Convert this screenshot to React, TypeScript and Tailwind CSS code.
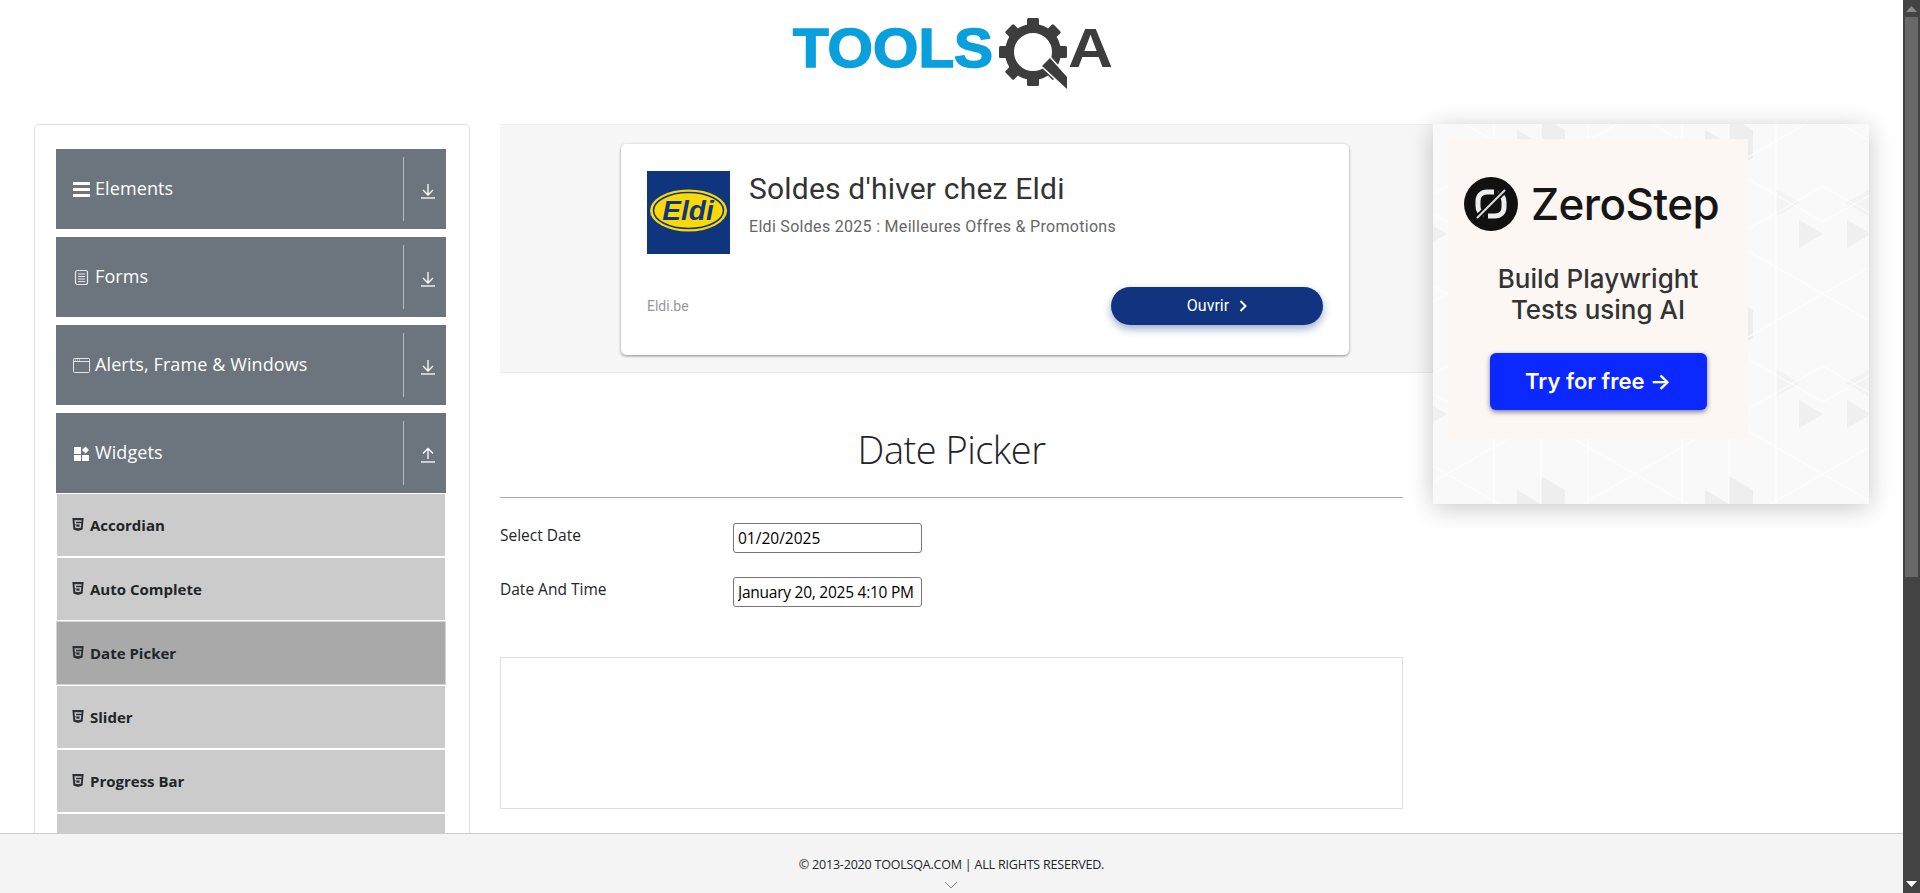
import { FaHtml5 } from "react-icons/fa";

const SEGOE = "font-['Open_Sans',sans-serif]";

const GROUPS = [
  { label: "Elements", icon: <BarsIcon />, open: false },
  { label: "Forms", icon: <FormIcon />, open: false },
  { label: "Alerts, Frame & Windows", icon: <WindowIcon />, open: false },
  { label: "Widgets", icon: <WidgetIcon />, open: true },
];

const WIDGETS = ["Accordian", "Auto Complete", "Date Picker", "Slider", "Progress Bar", "Tabs"];

function BarsIcon() {
  return (
    <svg width="17" height="17" viewBox="0 0 17 17" fill="#fff">
      <rect x="0" y="1" width="17" height="3" />
      <rect x="0" y="7" width="17" height="3" />
      <rect x="0" y="13" width="17" height="3" />
    </svg>
  );
}

function FormIcon() {
  return (
    <svg width="17" height="17" viewBox="0 0 17 17" fill="none" stroke="#e4e6e8">
      <rect x="2.5" y="1.5" width="12" height="14" rx="2" strokeWidth="1.2" />
      <path d="M5 5h7M5 7.5h7M5 10h7M5 12.5h7" strokeWidth="1" />
    </svg>
  );
}

function WindowIcon() {
  return (
    <svg width="17" height="17" viewBox="0 0 17 17" fill="none" stroke="#e4e6e8">
      <rect x="0.5" y="1.5" width="16" height="14" rx="1" strokeWidth="1" />
      <path d="M1 4.5h15" strokeWidth="1" />
      <path d="M2 3h1M4 3h1M6 3h1" strokeWidth="1" />
    </svg>
  );
}

function WidgetIcon() {
  return (
    <svg width="17" height="17" viewBox="0 0 17 17" fill="#fff">
      <rect x="1" y="2" width="7" height="7" />
      <rect x="1" y="10" width="7" height="6" />
      <rect x="9" y="10" width="7" height="6" />
      <rect x="10" y="2.5" width="5" height="5" transform="rotate(45 12.5 5)" />
    </svg>
  );
}

function ArrowIcon({ up }: { up: boolean }) {
  return (
    <svg width="16" height="16" viewBox="0 0 16 16" fill="none" stroke="#fff" strokeWidth="1.3">
      <path d="M1 15h14" />
      {up ? <path d="M8 12V1.5M3 6.5l5-5 5 5" /> : <path d="M8 1v11M3 7l5 5 5-5" />}
    </svg>
  );
}

function Logo() {
  const teeth = [0, 45, 90, 135, 180, 225, 270, 315];
  return (
    <svg width="330" height="96" viewBox="787 0 330 96">
      <text
        x="793"
        y="67"
        textLength="200"
        lengthAdjust="spacingAndGlyphs"
        fontFamily="'Liberation Sans', sans-serif"
        fontWeight="700"
        fontSize="56"
        fill="#0a9fdd"
        stroke="#0a9fdd"
        strokeWidth="1.6"
      >
        TOOLS
      </text>
      <circle cx="1033" cy="52" r="23.5" fill="none" stroke="#3d3d3d" strokeWidth="9" />
      {teeth.map((a) => (
        <rect key={a} x="1027" y="18" width="12" height="11" rx="1.5" fill="#3d3d3d" transform={`rotate(${a} 1033 52)`} />
      ))}
      <polygon points="1050,58 1067,77 1067,89 1042,66" fill="#3d3d3d" stroke="#fff" strokeWidth="3" paintOrder="stroke" />
      <text
        x="1068"
        y="67"
        textLength="45"
        lengthAdjust="spacingAndGlyphs"
        fontFamily="'Liberation Sans', sans-serif"
        fontWeight="700"
        fontSize="56"
        fill="#3d3d3d"
      >
        A
      </text>
    </svg>
  );
}

function EldiLogo() {
  return (
    <svg width="83" height="83" viewBox="0 0 83 83" className="shrink-0">
      <rect width="83" height="83" fill="#10357f" />
      <ellipse cx="41.5" cy="39.5" rx="38.5" ry="21" fill="#fbd908" />
      <ellipse cx="41.5" cy="39.5" rx="35" ry="18" fill="#fbd908" stroke="#10357f" strokeWidth="1.6" />
      <text
        x="41"
        y="49"
        textAnchor="middle"
        fontFamily="'Liberation Sans', sans-serif"
        fontWeight="700"
        fontStyle="italic"
        fontSize="28"
        fill="#10357f"
      >
        Eldi
      </text>
    </svg>
  );
}

function ZeroStepMark() {
  return (
    <svg width="54" height="54" viewBox="0 0 54 54" className="shrink-0">
      <circle cx="27" cy="27" r="27" fill="#111" />
      <path d="M20 37c-4-1-6-4-6-8v-5c0-6 4-9 9-9h7" fill="none" stroke="#eee" strokeWidth="5" />
      <path d="M34 17c4 1 6 4 6 8v5c0 6-4 9-9 9h-7" fill="none" stroke="#eee" strokeWidth="5" />
      <path d="M12 42L42 12" stroke="#111" strokeWidth="6" />
      <path d="M13 41L41 13" stroke="#ddd" strokeWidth="2" />
    </svg>
  );
}

function TrianglePattern() {
  return (
    <svg className="absolute inset-0 h-full w-full" aria-hidden="true">
      <defs>
        <pattern id="tri" width="188" height="180" x="14" y="-10" patternUnits="userSpaceOnUse">
          <rect width="188" height="180" fill="#f9f9f9" />
          <path d="M94 30l24-14v28zM94 30L70 16v28zM94 30v28l24-14zM94 30v-28l24 14z" fill="#eeeeee" />
          <path d="M0 120l24-14v28zM0 120l24 14 24-14-24-14zM188 120l-24-14v28z" fill="#f0f0f0" />
          <path d="M141 75l24 14-24 14zM47 75l-24 14 24 14z" fill="#f3f3f3" />
          <path d="M0 0l188 108M0 72l188 108M0 108L188 0M0 180l188-108M47 0v180M94 0v180M141 0v180" stroke="#ffffff" strokeWidth="1" fill="none" />
        </pattern>
      </defs>
      <rect width="100%" height="100%" fill="url(#tri)" />
    </svg>
  );
}

function Sidebar() {
  return (
    <aside className="h-[900px] w-[436px] shrink-0 rounded-[5px] border border-[#dfdfdf] bg-white pt-6 pr-[23px] pl-[21px]">
      <div className="flex flex-col gap-2">
        {GROUPS.map((g) => (
          <div key={g.label} className="flex h-20 items-center bg-[#6c757d] pl-[17px] text-white">
            <span className="flex w-[17px] shrink-0 items-center">{g.icon}</span>
            <span className="ml-[5px] flex-1 -translate-y-px text-[18px] tracking-[0.1px]">{g.label}</span>
            <span className="h-16 w-px bg-[#b4b9bd]" />
            <span className="flex w-[42px] translate-y-0.5 justify-center pl-1.5">
              <ArrowIcon up={g.open} />
            </span>
          </div>
        ))}
      </div>
      <div className="mx-px mt-px flex flex-col gap-0.5">
        {WIDGETS.map((w) => (
          <div
            key={w}
            className={`flex h-[62px] items-center pl-[14px] text-[#212529] ${
              w === "Date Picker" ? "bg-[#a9a9a9] outline outline-[#d3d6d9]" : "bg-[#cbcbcb]"
            }`}
          >
            <FaHtml5 className="h-[15px] w-[14px] shrink-0 -translate-y-[1px] text-[#2b2e33]" />
            <span className="ml-[5px] text-[15px] font-bold">{w}</span>
          </div>
        ))}
      </div>
    </aside>
  );
}

function AdBanner() {
  return (
    <div className="-mr-[30px] h-[249px] border-y border-[#eeeeee] bg-[#f7f7f7] pt-[19px] pl-[121px]">
      <div className="flex h-[211px] w-[728px] flex-col rounded-[5px] bg-white px-[26px] pt-[27px] font-['Roboto',sans-serif] shadow-[0_1px_3px_rgba(0,0,0,0.45)]">
        <div className="flex">
          <EldiLogo />
          <div className="ml-[19px]">
            <div className="text-[30px] leading-[36px] font-normal tracking-[0.2px] text-[#333333]">Soldes d'hiver chez Eldi</div>
            <div className="mt-[10px] text-[16px] leading-5 tracking-[0.3px] text-[#666666]">
              Eldi Soldes 2025 : Meilleures Offres &amp; Promotions
            </div>
          </div>
        </div>
        <div className="mt-[33px] flex items-center justify-between">
          <span className="text-[14px] text-[#999999]">Eldi.be</span>
          <span className="flex h-[38px] w-[212px] items-center justify-center gap-2.5 rounded-full bg-[#10347f] text-[16px] text-white shadow-[0_4px_8px_rgba(16,52,127,0.4)]">
            Ouvrir
            <svg width="8" height="12" viewBox="0 0 8 12" fill="none" stroke="#fff" strokeWidth="2">
              <path d="M1.5 1l5 5-5 5" />
            </svg>
          </span>
        </div>
      </div>
    </div>
  );
}

function ZeroStepAd() {
  return (
    <div className="relative ml-[30px] h-[380px] w-[436px] shrink-0 shadow-[0_4px_24px_rgba(0,0,0,0.22)]">
      <TrianglePattern />
      <div className="relative top-[15px] left-[15px] flex h-[300px] w-[300px] flex-col items-center bg-[#fcf7f2] font-['Inter',sans-serif]">
        <div className="mt-[38px] flex w-full items-center pl-4">
          <ZeroStepMark />
          <span className="ml-[13px] text-[44px] leading-none font-medium tracking-[-0.6px] text-[#161616]">ZeroStep</span>
        </div>
        <div className="mt-[32px] text-center text-[26px] leading-[31px] font-medium text-[#333333]">
          Build Playwright
          <br />
          Tests using AI
        </div>
        <span className="mt-[28px] flex h-[57px] w-[217px] items-center justify-center rounded-md bg-[#0a28ff] text-[22px] font-semibold text-white shadow-[0_2px_5px_rgba(0,0,60,0.5)]">
          Try for free →
        </span>
      </div>
    </div>
  );
}

export default function App() {
  return (
    <div className={`flex h-[893px] w-full overflow-hidden bg-white text-[#212529] ${SEGOE}`}>
      <div className="relative min-w-0 flex-1 overflow-hidden">
        <header className="flex h-[124px] justify-center">
          <Logo />
        </header>

        <div className="flex pl-[34px]">
          <Sidebar />
          <main className="ml-[30px] w-[903px] shrink-0">
            <AdBanner />
            <div className="flex h-[125px] items-center justify-center border-b border-[#aaaaaa] pt-[29px]">
              <h1 className="text-[38px] font-light tracking-[-0.5px] text-[#212529]">Date Picker</h1>
            </div>
            <form className="mt-[25px] flex flex-col gap-6 text-[15.5px]">
              <div className="flex h-[30px]">
                <label className="w-[233px] -translate-y-[3px] leading-[30px]">Select Date</label>
                <input
                  readOnly
                  value="01/20/2025"
                  className="h-[30px] w-[189px] rounded-[3px] border border-[#767676] bg-white px-1 text-[15.5px] text-black"
                />
              </div>
              <div className="flex h-[30px]">
                <label className="w-[233px] -translate-y-[3px] leading-[30px]">Date And Time</label>
                <input
                  readOnly
                  value="January 20, 2025 4:10 PM"
                  className="h-[30px] w-[189px] rounded-[3px] border border-[#767676] bg-white px-1 text-[15.5px] tracking-[-0.25px] text-black"
                />
              </div>
            </form>
            <div className="mt-[50px] h-[152px] border border-[#dedede]" />
          </main>
          <ZeroStepAd />
        </div>

        <footer className="absolute inset-x-0 bottom-0 h-[60px] border-t border-[#cccccc] bg-[#f4f4f4] pt-[22px] text-center text-[12.5px] leading-[18px] tracking-[-0.2px] text-[#212529]">
          © 2013-2020 TOOLSQA.COM | ALL RIGHTS RESERVED.
          <svg className="mx-auto mt-[7px] -translate-x-px" width="14" height="8" viewBox="0 0 14 8" fill="none" stroke="#888888">
            <path d="M1 1l6 6 6-6" />
          </svg>
        </footer>
      </div>

      <div className="flex w-[17px] shrink-0 flex-col items-center bg-[#434343]">
        <svg className="mt-[6px]" width="11" height="6" viewBox="0 0 11 6" fill="#8a8a8a">
          <path d="M5.5 0L11 6H0z" />
        </svg>
        <div className="mt-[5px] h-[560px] w-[13px] bg-[#686868]" />
        <svg className="mt-auto mb-[6px]" width="11" height="6" viewBox="0 0 11 6" fill="#ffffff">
          <path d="M0 0h11L5.5 6z" />
        </svg>
      </div>
    </div>
  );
}
